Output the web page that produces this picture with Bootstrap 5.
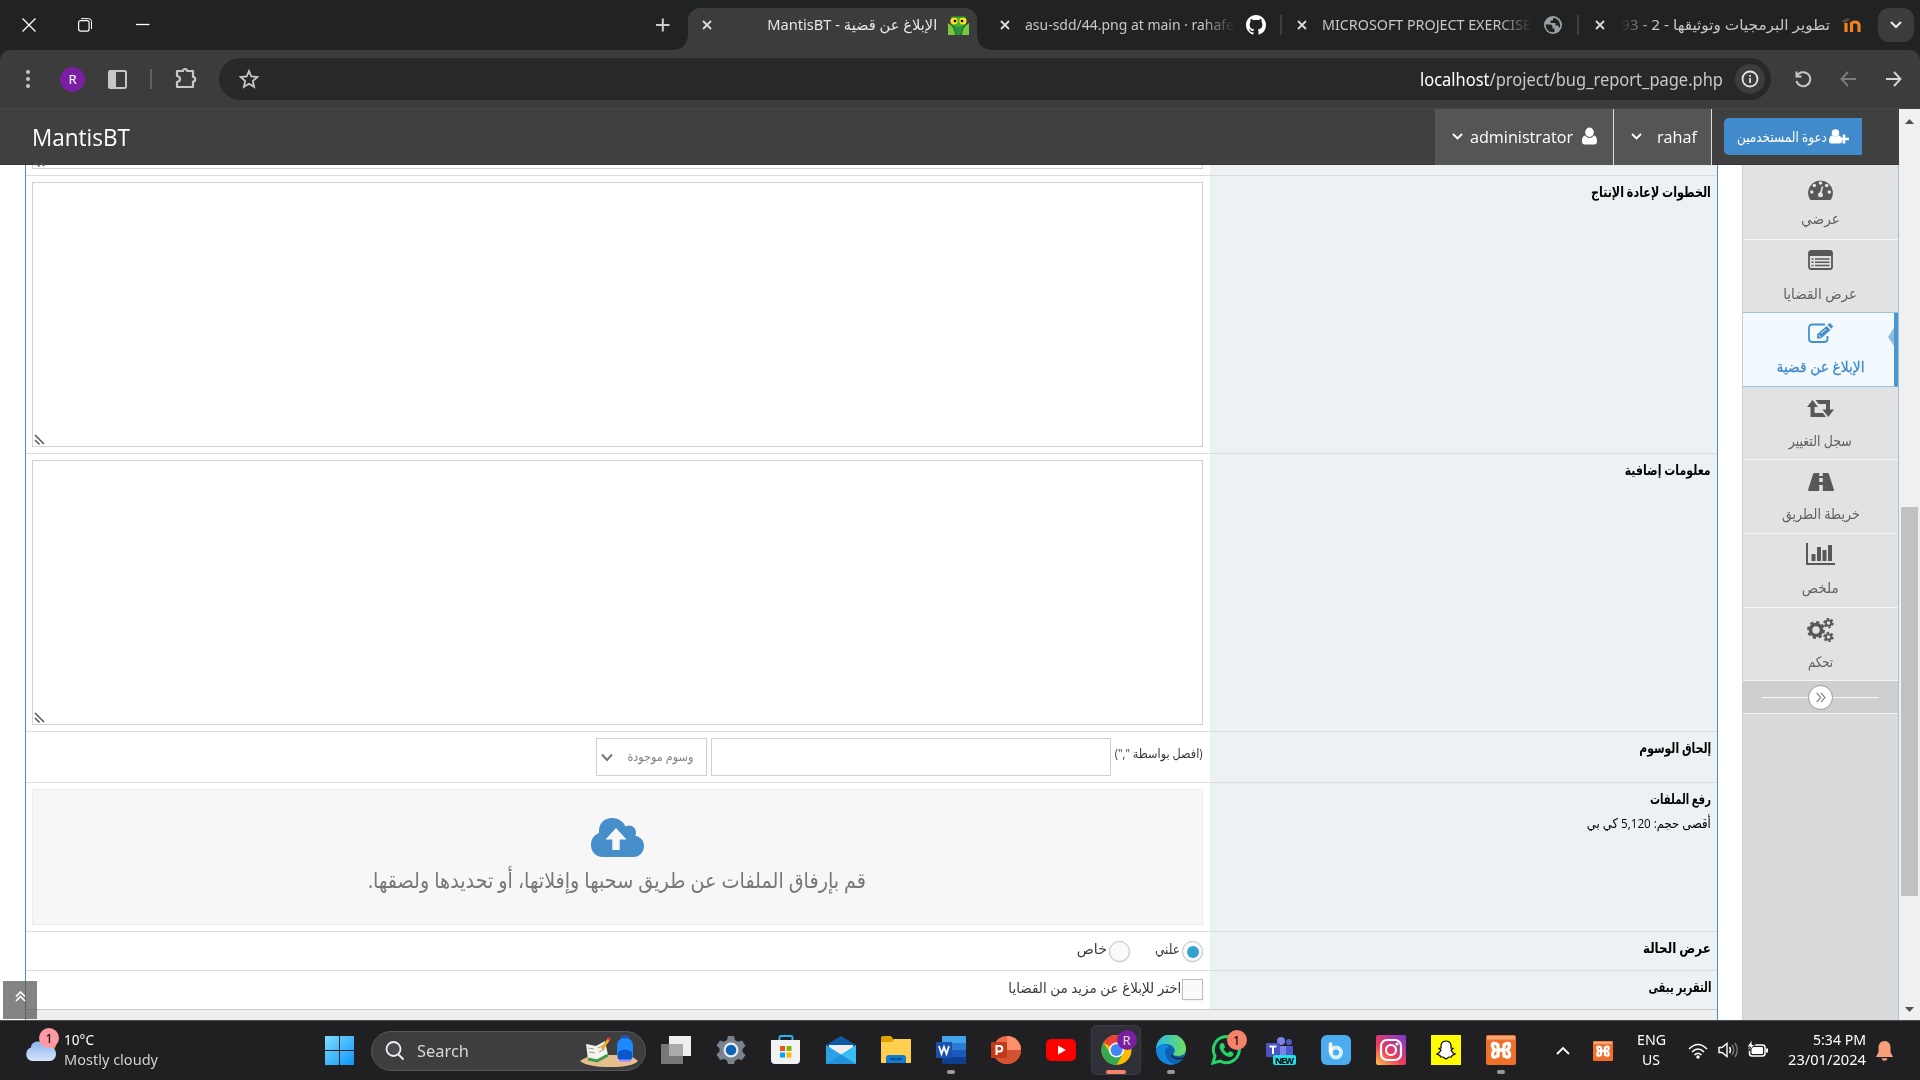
<!DOCTYPE html>
<html lang="ar">
<head>
<meta charset="utf-8">
<title>الإبلاغ عن قضية - MantisBT</title>
<link href="https://cdn.jsdelivr.net/npm/bootstrap@5.3.0/dist/css/bootstrap.min.css" rel="stylesheet">
<style>
body{width:1920px;height:1080px;overflow:hidden;font-family:"Open Sans","DejaVu Sans",sans-serif;font-size:13px;line-height:20px;color:#393939}
svg{display:block;flex:none}
.fit{display:inline-block;white-space:nowrap;flex:none}
.ui{font-family:"Noto Sans","DejaVu Sans",sans-serif}
/* browser frame */
.tabstrip{height:50px;background:#202322;color:#c7c7c7}
.winbtns{width:688px;padding-left:22px}
.btab{width:297.5px;height:42px;margin-top:8px;padding-left:14px;font-size:15px}
.btab .cap{width:210px;margin-left:15px;margin-right:11px;overflow:hidden;height:24px;line-height:23px}
.btab .sep{width:2px;height:20px;background:#3d403f;margin-left:14px}
.btab.fade-end .cap{-webkit-mask-image:linear-gradient(90deg,#000 84%,transparent)}
.btab.fade-start .cap{-webkit-mask-image:linear-gradient(270deg,#000 84%,transparent)}
.btab.on{color:#e6e6e6;position:relative;z-index:0}
.btab.on::before{content:"";position:absolute;z-index:-1;left:0;top:0;width:289px;height:42px;background:#3c3c3c;border-radius:12px 12px 0 0}
.btab.on::after{content:"";position:absolute;z-index:-1;left:-14px;bottom:0;width:317px;height:14px;background:radial-gradient(circle at 0 0,transparent 13.5px,#3c3c3c 14px) left/14px 14px no-repeat,radial-gradient(circle at 100% 0,transparent 13.5px,#3c3c3c 14px) right/14px 14px no-repeat}
.tabmenu{width:36px;height:34px;border-radius:11px;background:#3c3c3c;margin-left:auto;margin-right:6px}
.toolbar-wrap{background:#202322}
.toolbar{height:59px;background:#3c3c3c;border-bottom:1px solid #474747;border-radius:10px 10px 0 0;color:#c7c7c7}
.omni{width:1552px;height:42px;border-radius:21px;background:#282828;margin-left:22px}
.avatar{width:25px;height:25px;background:#7b1fa2;color:#fff;font-size:13px;margin-left:30px}
.infobg{width:30px;height:30px;background:#3c3c3c}
/* mantis */
.mbar{height:56px;background:#404040;border-bottom:1px solid #3a3638;color:#fff;font-size:16px}
.mbar .brand{font-size:23.5px;margin-left:32px}
.mcell{background:#555;height:56px;border-right:1px solid #ddd}
.invite{width:138px;height:37px;border-radius:5px 0 0 5px;background:#428bca;color:#fff;font-size:14px;margin:0 37px 0 12px;padding-left:13px;padding-right:13px}
.panel{margin-left:25px;width:1693px;border:solid #4a8fc2;border-width:0 1px}
.frow{border-bottom:1px solid #dcdcdc}
.lab{width:507px;background:#ecf2f4;padding:6px 6px 0;color:#000;font-weight:700;font-size:14px}
.lab .fw-normal{font-size:13.5px}
.fld{flex:1;padding:6px 7px 6px 6px;font-size:14px}
.ta{height:265px;border:1px solid #d0d0d0;position:relative}
.ta svg{position:absolute;left:1px;bottom:1px}
.tagbox{height:38px;border:1px solid #d0d0d0}
.dz{height:136px;background:#f7f7f7;border:1px solid #ececec;color:#777;font-size:21.5px;padding:28px 0 0}
.chk{width:21px;height:21px;border:1px solid #bdbdbd;background:#fafafa;flex:none;box-shadow:0 1px 2px #0001}
.side{width:157px;background:#dadada;border-left:1px solid #ccc;border-right:1px solid #9fc3df;color:#606060;font-size:14.5px}
.sitem{height:73.6px;background:#e2e2e2;border-bottom:1px solid #f6f6f6}
.sitem .ic{height:44px}
.sitem.on{background:#f2f9ff;color:#428bca;border-bottom-color:#9fc3df;border-right:4px solid #4b96cf;padding-left:4px;box-shadow:0 -1px #9fc3df;position:relative}
.sitem.on .fit{-webkit-text-stroke:.3px #428bca}
.sitem.on::after{content:"";position:absolute;right:0;top:15px;border:solid transparent;border-width:9px 6px 9px 0;border-right-color:#8ebbda}
.scol{height:33px;background:#cfcfcf;border-bottom:1px solid #f6f6f6}
.scol i{height:1px;background:#f6f6f6;width:46px}
.scol b{width:25px;height:25px;border:1px solid #999;background:#fff}
.sbar{width:21px;background:#f0f0f0}
.thumb{width:17px;height:389px;background:#c1c1c1;margin-top:383px}
.totop{position:absolute;left:3px;top:981px;width:34px;height:38px;background:rgba(85,85,85,.72)}
/* taskbar */
.tbar{height:60px;background:#202023;border-top:1px solid #4a4f4f;color:#fff;font-size:15px}
.lift{margin-top:-4px}
.sbox{width:275px;height:40px;border-radius:20px;background:#3e3e41;border:1px solid #56565a;margin-left:17px;padding:0 7px 0 13px}
.tapp{width:55px;height:50px;position:relative;flex:none;top:-1px}
.tapp .dot{position:absolute;bottom:1px;left:23px;width:8px;height:4px;border-radius:2px;background:#9a9a9a}
.tapp .dot.wide{left:17px;width:20px;background:#f4836a}
.tapp.on::before{content:"";position:absolute;left:2px;width:50px;height:50px;border-radius:5px;background:#303038;border:1px solid #3c3c44}
.bub{position:absolute;border-radius:50%;width:20px;height:20px;font-size:13px;line-height:20px;text-align:center}
</style>
<script src="https://cdn.jsdelivr.net/npm/bootstrap@5.3.0/dist/js/bootstrap.bundle.min.js"></script>
</head>
<body class="d-flex flex-column">
<svg width="0" height="0" class="position-absolute"><defs>
<symbol id="x" viewBox="0 0 10 10"><path d="M1 1l8 8M9 1L1 9" stroke="#dcdcdc" stroke-width="1.8"/></symbol>
<symbol id="grip" viewBox="0 0 11 11"><path d="M1 1l9 9M1 6l4.5 4.5" stroke="#555" stroke-width="1.5"/></symbol>
<symbol id="xampp" viewBox="0 0 30 30"><rect width="30" height="30" rx="2" fill="#f0702a"/><path d="M1 1h28v3.500H1z" fill="#f7a477"/><path d="M11.500 9.500Q6 6.500 6.500 11q.3 2.500 2.500 4-2.200 1.500-2.500 4-.5 5 5 2M18.500 9.500q5.500-3 5 1.500-.3 2.500-2.500 4 2.200 1.500 2.500 4 .5 5-5 2M12 10v2.500q0 2.500 3 2.500t3-2.500V10M12 21v-3.500q0-2.500 3-2.500t3 2.500V21" fill="none" stroke="#fff" stroke-width="3.300" stroke-linecap="round"/></symbol>
</defs></svg>

<div class="tabstrip d-flex ui">
  <div class="winbtns d-flex align-items-center">
    <svg width="14" height="14" viewBox="0 0 14 14"><path d="M.5.5l13 13M13.500.5l-13 13" stroke="#fff" stroke-width="1.3"/></svg>
    <svg width="14" height="14" viewBox="0 0 14 14" style="margin-left:42px"><rect x=".6" y="2.600" width="10.500" height="10.500" rx="2" fill="none" stroke="#fff" stroke-width="1.200"/><path d="M3 .6h7.500a3 3 0 0 1 3 3V11" fill="none" stroke="#fff"/></svg>
    <svg width="14" height="14" viewBox="0 0 14 14" style="margin-left:44px"><path d="M0 6.500h13.500" stroke="#fff" stroke-width="1.300"/></svg>
    <svg width="14" height="14" viewBox="0 0 14 14" style="margin-left:506px"><path d="M0 7h13.500M6.800.5v13" stroke="#ccc" stroke-width="2"/></svg>
  </div>
  <div class="btab on d-flex align-items-center pb-2">
    <svg width="10" height="10"><use href="#x"/></svg>
    <div class="cap" dir="rtl"><span class="fit" data-w="170">الإبلاغ عن قضية - MantisBT</span></div>
    <svg width="21" height="20" viewBox="0 0 21 20"><path d="M3 1h15v10l2 9H1l2-9z" fill="#1d7a2c"/><path d="M0 8q6 3 7 12H0zM21 8q-6 3-7 12h7z" fill="#7ac93b"/><path d="M5 9l5 3 6-3-4 11h-3z" fill="#2c9440"/><ellipse cx="10.500" cy="7" rx="7" ry="5" fill="#4caf32"/><circle cx="6" cy="6" r="3.600" fill="#ffdf1f"/><circle cx="15" cy="6" r="3.600" fill="#ffdf1f"/><circle cx="7" cy="6" r="1.300"/><circle cx="14" cy="6" r="1.300"/></svg>
  </div>
  <div class="btab fade-end d-flex align-items-center pb-2">
    <svg width="10" height="10"><use href="#x"/></svg>
    <div class="cap"><span class="fit" data-w="209">asu-sdd/44.png at main · rahafe</span></div>
    <svg width="20" height="20" viewBox="0 0 16 16" fill="#fff"><path d="M8 0C3.580 0 0 3.580 0 8c0 3.540 2.290 6.530 5.470 7.590.4.070.55-.17.55-.38 0-.19-.01-.82-.01-1.490-2.010.37-2.530-.49-2.690-.94-.09-.23-.48-.94-.82-1.130-.28-.15-.68-.52-.01-.53.63-.01 1.080.58 1.230.82.72 1.210 1.870.87 2.330.66.070-.52.28-.87.51-1.070-1.780-.2-3.640-.89-3.640-3.950 0-.87.31-1.590.82-2.150-.08-.2-.36-1.020.08-2.120 0 0 .67-.21 2.200.82a7.600 7.600 0 0 1 4 0c1.530-1.040 2.200-.82 2.200-.82.44 1.100.16 1.920.08 2.120.51.56.82 1.270.82 2.150 0 3.070-1.870 3.750-3.650 3.950.29.25.54.73.54 1.480 0 1.070-.01 1.930-.01 2.200 0 .21.15.46.55.38A8 8 0 0 0 16 8c0-4.420-3.580-8-8-8z"/></svg>
    <div class="sep"></div>
  </div>
  <div class="btab fade-end d-flex align-items-center pb-2">
    <svg width="10" height="10"><use href="#x"/></svg>
    <div class="cap"><span class="fit" data-w="209">MICROSOFT PROJECT EXERCISE</span></div>
    <svg width="20" height="20" viewBox="0 0 20 20"><circle cx="10" cy="10" r="9" fill="#9aa0a6"/><path d="M2.500 9.500h5q2 0 2 2v2h2v3.500q-8 1.500-9-7.500zM10 3v2.500H7.500V8h5v2.500h3v2h1.500q1-6-4-9z" fill="#202322"/></svg>
    <div class="sep"></div>
  </div>
  <div class="btab fade-start d-flex align-items-center pb-2">
    <svg width="10" height="10"><use href="#x"/></svg>
    <div class="cap" dir="rtl"><span class="fit" data-w="209">تطوير البرمجيات وتوثيقها - 2 - 93</span></div>
    <svg width="20" height="16" viewBox="0 0 20 16"><path d="M5 15V6M10.500 15V8q0-3 3.500-3t4 3v7M10.500 15V5" stroke="#f47f20" stroke-width="3.200" fill="none"/><path d="M0 4l7-3 2 2-5 3z" fill="#5a4a40"/></svg>
  </div>
  <div class="tabmenu d-flex align-items-center justify-content-center mt-2"><svg width="12" height="8" viewBox="0 0 12 8"><path d="M1 1l5 5 5-5" fill="none" stroke="#eee" stroke-width="2"/></svg></div>
</div>
<div class="toolbar-wrap">
<div class="toolbar d-flex align-items-center ui">
  <svg width="4" height="18" viewBox="0 0 4 18" fill="#c7c7c7" style="margin-left:26px"><circle cx="2" cy="2" r="2"/><circle cx="2" cy="9" r="2"/><circle cx="2" cy="16" r="2"/></svg>
  <div class="avatar rounded-circle d-flex align-items-center justify-content-center">R</div>
  <svg width="19" height="19" viewBox="0 0 19 19" style="margin-left:23px"><rect x="1" y="1" width="17" height="17" rx="1.500" fill="none" stroke="#c7c7c7" stroke-width="2"/><path d="M1 1h7v17H1z" fill="#c7c7c7"/></svg>
  <div style="width:2px;height:20px;background:#606060;margin-left:23px"></div>
  <svg width="22" height="22" viewBox="0 0 22 22" style="margin:0 0 2px 23px"><path d="M2 4h6a2 2 0 0 1 4 0h6v6a2 2 0 0 1 0 4.500V20H2v-5q3-.5 3-3T2 9z" fill="none" stroke="#c7c7c7" stroke-width="2.200" stroke-linejoin="round"/></svg>
  <div class="omni d-flex align-items-center">
    <svg width="20" height="20" viewBox="0 0 20 20" style="margin-left:20px"><path d="M10 2l2.300 5.500 6 .5-4.500 4 1.300 5.800L10 14.700l-5.100 3.100L6.200 12 1.700 8l6-.5z" fill="none" stroke="#c7c7c7" stroke-width="1.800"/></svg>
    <div class="ms-auto d-flex align-items-center" style="font-size:17.500px"><span class="fit" data-w="303"><span class="text-white">localhost</span>/project/bug_report_page.php</span>
    <div class="infobg rounded-circle d-flex align-items-center justify-content-center" style="margin:0 6px 0 12px"><svg width="18" height="18" viewBox="0 0 18 18"><circle cx="9" cy="9" r="7.500" fill="none" stroke="#e3e3e3" stroke-width="1.800"/><path d="M9 8v5M9 5v1.800" stroke="#e3e3e3" stroke-width="1.800"/></svg></div></div>
  </div>
  <svg width="18" height="18" viewBox="0 0 18 18" style="margin-left:23px"><path d="M2.500 1.500V6.500h5M3 6a7 7 0 1 1-.5 5" fill="none" stroke="#c7c7c7" stroke-width="2"/></svg>
  <svg width="17" height="16" viewBox="0 0 17 16" style="margin-left:28px"><path d="M16 8H2M8 1L1.500 8 8 15" fill="none" stroke="#7d7d7d" stroke-width="1.900"/></svg>
  <svg width="17" height="16" viewBox="0 0 17 16" style="margin-left:28px"><path d="M1 8h14M9 1l6.500 7L9 15" fill="none" stroke="#d5d5d5" stroke-width="1.900"/></svg>
</div></div>

<div class="d-flex bg-white position-relative" style="height:911px">
  <div class="d-flex flex-column" style="width:1899px">
    <nav class="mbar d-flex align-items-center flex-shrink-0">
      <span class="brand"><span class="fit" data-w="98">MantisBT</span></span>
      <div class="mcell ms-auto d-flex align-items-center" style="width:179px;padding-left:17px">
        <svg width="11" height="7" viewBox="0 0 11 7"><path d="M1 1l4.500 4.500L10 1" fill="none" stroke="#fff" stroke-width="1.900"/></svg>
        <span class="fit" data-w="103" style="margin-left:7px">administrator</span>
        <svg width="15" height="18" viewBox="0 0 16 18" fill="#fff" style="margin:0 0 2px 9px"><ellipse cx="8" cy="5" rx="4.600" ry="5"/><path d="M3.500 8.500C1 9 0 11 0 14.500 0 17 1 18 3 18h10c2 0 3-1 3-3.500C16 11 15 9 12.500 8.500 11 10.500 9.500 11 8 11s-3-.5-4.500-2.500z"/></svg>
      </div>
      <div class="mcell d-flex align-items-center" style="width:98px;padding-left:17px">
        <svg width="11" height="7" viewBox="0 0 11 7"><path d="M1 1l4.500 4.500L10 1" fill="none" stroke="#fff" stroke-width="1.900"/></svg>
        <span class="fit" data-w="40" style="margin-left:15px">rahaf</span>
      </div>
      <div class="invite d-flex align-items-center justify-content-between" dir="ltr"><span class="fit" data-w="90">دعوة المستخدمين</span>
        <svg width="20" height="15" viewBox="0 0 20 15" fill="#fff"><circle cx="6.500" cy="4" r="3.800"/><path d="M3 6.500C1 7 0 9 0 12q0 2.500 2.500 2.500h8Q13 14.500 13 12c0-3-1-5-3-5.500-1.500 1.500-5.500 1.500-7 0z"/><path d="M15 5.500v9M10.500 10H20" stroke="#fff" stroke-width="2.600"/></svg></div>
    </nav>
    <div class="d-flex flex-grow-1">
      <main class="panel d-flex flex-column" dir="rtl">
        <div class="frow d-flex" style="height:11px"><div class="lab"></div><div class="fld pt-0"><div class="ta" style="height:4px;border-top:0"><svg width="11" height="4" viewBox="0 7 11 4"><use href="#grip" width="11" height="11"/></svg></div></div></div>
        <div class="frow d-flex" style="height:278px"><div class="lab"><span class="fit" data-w="120">الخطوات لإعادة الإنتاج</span></div><div class="fld"><div class="ta"><svg width="11" height="11"><use href="#grip"/></svg></div></div></div>
        <div class="frow d-flex" style="height:278px"><div class="lab"><span class="fit" data-w="86">معلومات إضافية</span></div><div class="fld"><div class="ta"><svg width="11" height="11"><use href="#grip"/></svg></div></div></div>
        <div class="frow d-flex" style="height:51px"><div class="lab"><span class="fit" data-w="72">إلحاق الوسوم</span></div>
          <div class="fld d-flex"><span class="fit" data-w="88" style="font-size:12.500px;margin-top:6px">(افصل بواسطة ",")</span><div class="tagbox" style="width:400px;margin-right:4px"></div>
            <div class="tagbox d-flex align-items-center justify-content-between" style="width:111px;margin-right:4px;padding:0 13px 0 4px;color:#858585;font-size:12.500px"><span class="fit" data-w="66">وسوم موجودة</span><svg width="12" height="9" viewBox="0 0 12 9"><path d="M1 1.500l5 5.500 5-5.500" fill="none" stroke="#777" stroke-width="2"/></svg></div></div></div>
        <div class="frow d-flex" style="height:149px"><div class="lab"><span class="fit" data-w="61">رفع الملفات</span><br><span class="fit fw-normal" data-w="124" style="margin-top:4px">أقصى حجم: 5,120 كي بي</span></div>
          <div class="fld"><div class="dz d-flex flex-column align-items-center">
            <svg width="53" height="39" viewBox="0 0 53 39"><path d="M12 39C4 39 0 33 0 27c0-6 3-10 8-12C7 5 14 0 21 0c6 0 11 3 13.500 8.500C39 6 45 9 45 14.500c0 1.200-.2 2.200-.8 3.300C50 19 53 23 53 28c0 6-4 11-11 11z" fill="#478fca"/><path d="M25 10L35.500 21.500h-6.800V32h-7.400V21.500h-6.800z" fill="#f7f7f7"/></svg>
            <span class="fit" data-w="498" style="margin-top:13px">قم بإرفاق الملفات عن طريق سحبها وإفلاتها، أو تحديدها ولصقها.</span></div></div></div>
        <div class="frow d-flex" style="height:39px"><div class="lab"><span class="fit" data-w="68">عرض الحالة</span></div>
          <div class="fld d-flex align-items-start" style="padding-top:9px"><div class="chk rounded-circle d-flex align-items-center justify-content-center"><div class="rounded-circle" style="width:12px;height:12px;background:#32a3ce"></div></div><span class="fit" data-w="25" style="margin-right:2px;margin-top:-2px">علني</span>
            <div style="width:25px;flex:none"></div><div class="chk rounded-circle"></div><span class="fit" data-w="30" style="margin-right:2px;margin-top:-2px">خاص</span></div></div>
        <div class="frow d-flex" style="height:39px;border-color:#c9c9c9"><div class="lab"><span class="fit" data-w="63">التقرير يبقى</span></div>
          <div class="fld d-flex align-items-start" style="padding-top:8px"><div class="chk"></div><span class="fit" data-w="173" style="margin-right:1px;margin-top:-1px">اختر للإبلاغ عن مزيد من القضايا</span></div></div>
        <div class="flex-grow-1" style="background:#eee"></div>
      </main>
      <aside class="side ms-auto" dir="rtl">
        <div class="sitem text-center" style="height:74.600px"><div class="ic d-flex align-items-center justify-content-center pt-1"><svg width="25" height="21" viewBox="0 0 25 21"><path d="M2 20.500a12.400 12.400 0 1 1 21 0q-.5.5-1 .5H3q-.7 0-1-.5z" fill="#585858"/><g fill="#e2e2e2"><circle cx="3.800" cy="13" r="1.800"/><circle cx="6.300" cy="6.500" r="1.800"/><circle cx="12.500" cy="4" r="1.800"/><circle cx="18.700" cy="6.500" r="1.800"/><circle cx="21.300" cy="13" r="1.800"/><circle cx="12.500" cy="15.800" r="2.500"/></g><path d="M12.500 15l2-7.500" stroke="#e2e2e2" stroke-width="1.600"/></svg></div><span class="fit" data-w="39">عرضي</span></div>
        <div class="sitem text-center"><div class="ic d-flex align-items-center justify-content-center pb-1"><svg width="25" height="20" viewBox="0 0 25 20"><rect x="1" y="1" width="23" height="18" rx="2" fill="none" stroke="#585858" stroke-width="1.800"/><path d="M1 1h23v5H1z" fill="#585858"/><path d="M3.500 9h2M7 9h14.500M3.500 12.300h2M7 12.300h14.500M3.500 15.600h2M7 15.600h14.500" stroke="#585858" stroke-width="1.500"/></svg></div><span class="fit" data-w="74">عرض القضايا</span></div>
        <div class="sitem on text-center"><div class="ic d-flex align-items-center justify-content-center pb-1"><svg width="25" height="20" viewBox="0 0 25 20"><path d="M17 1.500H4.500Q1 1.500 1 5v11q0 3 3.500 3h11.500q3.500 0 3.500-3v-3" fill="none" stroke="#478fca" stroke-width="1.800"/><path d="M9 15.500v-4L18.500 3l4 4-9.500 8.500zM19.500 2l1.500-1.500q.8-.6 1.500 0L24.700 2.700q.6.8 0 1.400L23.400 5.800z" fill="#478fca"/><path d="M10.500 12l2.500 2.500M13 10.500l5-4.500" stroke="#f2f9ff" stroke-width="1"/></svg></div><span class="fit" data-w="88">الإبلاغ عن قضية</span></div>
        <div class="sitem text-center"><div class="ic d-flex align-items-center justify-content-center"><svg width="27" height="17" viewBox="0 0 27 17" fill="#585858"><path d="M5.500 0L11 7H7.500v6H16l3 4H3.500V7H0zM8.500 0H23v9.500h4L21.300 17l-5.800-7.500H19V4h-7.300z"/></svg></div><span class="fit" data-w="63">سجل التغيير</span></div>
        <div class="sitem text-center"><div class="ic d-flex align-items-center justify-content-center"><svg width="26" height="18" viewBox="0 0 26 18"><path d="M6.500 0h13q1 0 1.400 1L26 17q0 1-1 1H1q-1 0-1-1L5.100 1Q5.500 0 6.500 0z" fill="#585858"/><path d="M13 0v3M13 5v4M13 12v6" stroke="#e2e2e2" stroke-width="3.500"/></svg></div><span class="fit" data-w="78">خريطة الطريق</span></div>
        <div class="sitem text-center"><div class="ic d-flex align-items-center justify-content-center pb-1"><svg width="29" height="22" viewBox="0 0 29 22"><path d="M1 0v21h28" fill="none" stroke="#585858" stroke-width="2"/><path d="M7.500 18v-7M13 18V4M18.500 18V7M24 18V2" stroke="#585858" stroke-width="4"/></svg></div><span class="fit" data-w="37">ملخص</span></div>
        <div class="sitem text-center"><div class="ic d-flex align-items-center justify-content-center"><svg width="27" height="24" viewBox="0 0 27 24" fill="none" stroke="#585858"><circle cx="9" cy="12" r="5.500" stroke-width="3.600"/><circle cx="9" cy="12" r="7.900" stroke-width="2.200" stroke-dasharray="3.300 2.900"/><circle cx="21.500" cy="5" r="2.800" stroke-width="2"/><circle cx="21.500" cy="5" r="4.400" stroke-width="1.700" stroke-dasharray="2.300 2.300"/><circle cx="21.500" cy="19" r="2.800" stroke-width="2"/><circle cx="21.500" cy="19" r="4.400" stroke-width="1.700" stroke-dasharray="2.300 2.300"/></svg></div><span class="fit" data-w="25">تحكم</span></div>
        <div class="scol d-flex align-items-center justify-content-center"><i></i><b class="rounded-circle d-flex align-items-center justify-content-center"><svg width="10" height="11" viewBox="0 0 10 11"><path d="M.7 1l4 4.500-4 4.500M5 1l4 4.500L5 10" fill="none" stroke="#888" stroke-width="1.200"/></svg></b><i></i></div>
      </aside>
    </div>
  </div>
  <div class="sbar d-flex flex-column align-items-center">
    <svg width="9" height="5" viewBox="0 0 9 5" style="margin-top:10px"><path d="M4.500 0L9 5H0z" fill="#505050"/></svg>
    <div class="thumb"></div>
    <svg class="mt-auto" width="9" height="5" viewBox="0 0 9 5" style="margin-bottom:8px"><path d="M0 0h9L4.500 5z" fill="#505050"/></svg>
  </div>
</div>
<a class="totop d-flex align-items-center justify-content-center pb-2"><svg width="11" height="11" viewBox="0 0 11 11"><path d="M1 5.500l4.500-4.500L10 5.500M1 10l4.500-4.500L10 10" fill="none" stroke="#fff" stroke-width="1.700"/></svg></a>

<footer class="tbar d-flex align-items-center ui">
  <div class="d-flex align-items-center position-relative lift" style="width:325px;padding-left:25px">
    <svg width="31" height="28" viewBox="0 0 31 28"><defs><linearGradient id="cl" x2="0" y2="1"><stop stop-color="#8bb4f0"/><stop offset="1" stop-color="#d4e4fb"/></linearGradient></defs><circle cx="25" cy="10" r="6" fill="#f7811f"/><path d="M7 26a7 7 0 0 1-1-13.500C6 5 18 4 20 12c5-3 11 1 11 7 0 4-3 7-6 7z" fill="url(#cl)"/></svg>
    <span class="bub text-black" style="left:39px;top:-1px;background:#ff99a4">1</span>
    <div style="margin-left:8px"><div><span class="fit" data-w="30">10°C</span></div><div style="color:#d0d0d0"><span class="fit" data-w="94">Mostly cloudy</span></div></div>
  </div>
  <svg width="29" height="29" viewBox="0 0 29 29"><defs><linearGradient id="wn" x2="1" y2="1"><stop stop-color="#7fdcff"/><stop offset="1" stop-color="#0a96f8"/></linearGradient></defs><path d="M0 0h14v14H0zM15 0h14v14H15zM0 15h14v14H0zM15 15h14v14H15z" fill="url(#wn)"/></svg>
  <div class="sbox d-flex align-items-center">
    <svg width="20" height="20" viewBox="0 0 20 20"><circle cx="8.500" cy="8" r="7" fill="#4a4a50" stroke="#eee" stroke-width="1.800"/><path d="M13.500 13.500l5 5" stroke="#eee" stroke-width="2"/></svg>
    <span class="fit" data-w="52" style="margin-left:12px;color:#d6d6d6;font-size:16.500px">Search</span>
    <svg class="ms-auto" width="58" height="32" viewBox="0 0 58 32"><path d="M0 26q8-6 20-6h26q8 2 12 6-6 6-28 6T0 26z" fill="#e5c08c"/><path d="M6 9l10 2 9-5 3 14-11 6-9-2z" fill="#f3f3ea"/><path d="M8 24l9 2 11-6" fill="none" stroke="#3b9a4c" stroke-width="3"/><path d="M8 13l6 1M9 17l6 1M18 13l6-3M19 17l6-3" stroke="#999"/><path d="M22 14l7-10" stroke="#f5a623" stroke-width="3"/><path d="M28 5l1.500-2" stroke="#e53935" stroke-width="3.500"/><path d="M41 3q4-4 8 0" fill="none" stroke="#2457c5" stroke-width="2"/><rect x="37" y="3" width="16" height="24" rx="7" fill="#1e88ff"/><path d="M38 17q7-5 14 0v7H38z" fill="#0b57c9"/><path d="M39 26h12" stroke="#c18cf5" stroke-width="2"/></svg>
  </div>
  <div class="d-flex" style="margin-left:2.500px;width:880px">
    <div class="tapp d-flex align-items-center justify-content-center"><svg width="30" height="28" viewBox="0 0 30 28"><rect x="8" width="22" height="20" fill="#efefef"/><rect y="8" width="22" height="20" fill="#777"/><rect x="8" y="8" width="14" height="12" fill="#aaa"/></svg></div>
    <div class="tapp d-flex align-items-center justify-content-center"><svg width="30" height="30" viewBox="0 0 30 30"><path d="M12 1h6l1 4 3 1.700L26 5.500l3.500 5.500-3 3v3l3 3L26 25l-4-1-3 1.700L18 29h-6l-1-3.500L8 24l-4 1-3.500-5.500 3-3v-3l-3-3L4 5.500l4 1.200L11 5z" fill="#78838e"/><circle cx="15" cy="15" r="7.500" fill="#e9edf0"/><circle cx="15" cy="15" r="5.300" fill="#0f63b5"/></svg></div>
    <div class="tapp d-flex align-items-center justify-content-center"><svg width="30" height="30" viewBox="0 0 30 30"><path d="M8.500 7V2.500q0-1.500 1.500-1.500h10q1.500 0 1.500 1.500V7" fill="none" stroke="#2bb3ec" stroke-width="2"/><path d="M0 5h29v20q0 4-4 4H4q-4 0-4-4z" fill="#f2f2f2"/><path d="M9 11h5v5H9z" fill="#f25022"/><path d="M15.500 11h5v5h-5z" fill="#7fba00"/><path d="M9 17.500h5v5H9z" fill="#00a4ef"/><path d="M15.500 17.500h5v5h-5z" fill="#ffb900"/></svg></div>
    <div class="tapp d-flex align-items-center justify-content-center"><svg width="30" height="28" viewBox="0 0 30 28"><path d="M0 9L15 0l15 9v10H0z" fill="#0c59a4"/><path d="M3 9h24v8L15 20 3 17z" fill="#eee"/><path d="M0 9l30 19H0z" fill="#2ea1e6"/><path d="M30 9v19H0z" fill="#35bff2"/><path d="M15 18.500L30 28H0z" fill="#2290dc"/></svg></div>
    <div class="tapp d-flex align-items-center justify-content-center"><svg width="30" height="28" viewBox="0 0 30 28"><path d="M0 2q0-2 2-2h8l3 4h17v8H0z" fill="#e2a100"/><path d="M0 6h11l2-3h17v24H0z" fill="#ffd04f"/><path d="M5 27v-5q0-3 3-3h14q3 0 3 3v5z" fill="#0f7bd0"/><path d="M9 23h12" stroke="#0a4d8c" stroke-width="2"/></svg></div>
    <div class="tapp d-flex align-items-center justify-content-center"><svg width="30" height="28" viewBox="0 0 30 28"><path d="M6 0h24v7H6z" fill="#41a5ee"/><path d="M6 7h24v7H6z" fill="#2b7cd3"/><path d="M6 14h24v7H6z" fill="#185abd"/><path d="M6 21h24v7H6z" fill="#103f91"/><rect y="6" width="16" height="16" rx="1" fill="#1a51ad"/><path d="M3 10l2.500 8L8 11l2.500 7L13 10" fill="none" stroke="#fff" stroke-width="1.800"/></svg><span class="dot"></span></div>
    <div class="tapp d-flex align-items-center justify-content-center"><svg width="30" height="28" viewBox="0 0 30 28"><circle cx="16" cy="14" r="14" fill="#ed6c47"/><path d="M16 0a14 14 0 0 1 14 14H16z" fill="#ff8f6b"/><path d="M2 14h28a14 14 0 0 1-28 0z" fill="#d35230"/><rect y="6" width="16" height="16" rx="1" fill="#c13b1b"/><path d="M5.500 19v-9h3a2.700 2.700 0 0 1 0 5.500h-3" fill="none" stroke="#fff" stroke-width="2"/></svg></div>
    <div class="tapp d-flex align-items-center justify-content-center"><svg width="30" height="22" viewBox="0 0 30 22"><rect width="30" height="22" rx="5" fill="#f00"/><path d="M12 6.500l8 4.500-8 4.500z" fill="#fff"/></svg></div>
    <div class="tapp on d-flex align-items-center justify-content-center"><svg class="position-relative" width="31" height="30" viewBox="0 0 30 30"><circle cx="15" cy="15" r="15" fill="#fbbc04"/><path d="M15 15L2 7.500A15 15 0 0 1 28 7.500H15z" fill="#ea4335"/><path d="M15 15L15 22.500 10.500 29.300A15 15 0 0 1 2 7.500l6.500 11z" fill="#34a853"/><path d="M21.500 18.700L15 30A15 15 0 0 1 10 29l5-7z" fill="#34a853"/><circle cx="15" cy="15" r="7.500" fill="#fff"/><circle cx="15" cy="15" r="6" fill="#4285f4"/></svg><span class="bub" style="background:#7b1fa2;left:28px;top:5px;color:#ddd">R</span><span class="dot wide"></span></div>
    <div class="tapp d-flex align-items-center justify-content-center"><svg width="30" height="30" viewBox="0 0 30 30"><defs><linearGradient id="eg" x2="1"><stop stop-color="#2bb6ee"/><stop offset="1" stop-color="#6ee05b"/></linearGradient></defs><circle cx="15" cy="15" r="15" fill="#0e62b6"/><path d="M0 14A15 15 0 0 1 30 14c0 5-4 7-8 7-3 0-5-1-5-2 2-2 2-4 1-6-4-6-14-5-18 1z" fill="url(#eg)"/><path d="M0 15c2-6 9-7 13-4-4 2-5 6-3 11 2 4 5 6 9 7A15 15 0 0 1 0 15z" fill="#1386dc"/><path d="M16 19c1 4 7 5 12 3l3-3v4l-3 0c-3 2-6 1.500-8 1-4-1-6-4-4-5z" fill="#202023"/></svg><span class="dot"></span></div>
    <div class="tapp d-flex align-items-center justify-content-center"><svg width="30" height="30" viewBox="0 0 30 30"><path d="M2 28l2-7A13 13 0 1 1 9 26z" fill="none" stroke="#25d366" stroke-width="3"/><path d="M10 8l3 .5 1 4-1.500 1.500q1.500 3 4.500 4l2-2 3.500 2q0 4-4 4C13 21 8 15 8.500 11z" fill="#25d366"/></svg><span class="bub text-black" style="background:#f4836a;left:28px;top:5px">1</span></div>
    <div class="tapp d-flex align-items-center justify-content-center"><svg width="30" height="30" viewBox="0 0 30 30"><circle cx="15" cy="6" r="4" fill="#7b83eb"/><circle cx="23" cy="7" r="3" fill="#5059c9"/><path d="M19 11h8v12h-8z" fill="#5059c9"/><path d="M8 11h12v14H8z" fill="#7b83eb"/><rect y="8" width="14" height="14" rx="1" fill="#4b53bc"/><path d="M3.500 11.500h7M7 11.500V19" stroke="#fff" stroke-width="2"/><rect x="7" y="20" width="23" height="10" rx="2" fill="#22e0e8"/><text x="9" y="28.500" font-size="9" font-weight="700" textLength="19">NEW</text></svg></div>
    <div class="tapp d-flex align-items-center justify-content-center"><svg width="30" height="30" viewBox="0 0 30 30"><rect width="30" height="30" rx="6" fill="#4badf0"/><circle cx="15" cy="17.500" r="5" fill="none" stroke="#d7f0ff" stroke-width="3.800"/><path d="M9.500 9v8" stroke="#fff" stroke-width="3.500" stroke-linecap="round"/></svg></div>
    <div class="tapp d-flex align-items-center justify-content-center"><svg width="30" height="30" viewBox="0 0 30 30"><defs><linearGradient id="ig" x1="0" y1="1" x2=".8" y2="0"><stop stop-color="#ffc24a"/><stop offset=".45" stop-color="#ee3b5b"/><stop offset="1" stop-color="#8a3ac8"/></linearGradient></defs><rect width="30" height="30" rx="2" fill="url(#ig)"/><rect x="5" y="5" width="20" height="20" rx="6" fill="none" stroke="#fff" stroke-width="2.200"/><circle cx="15" cy="15" r="5" fill="none" stroke="#fff" stroke-width="2.200"/><circle cx="21" cy="9" r="1.500" fill="#fff"/></svg></div>
    <div class="tapp d-flex align-items-center justify-content-center"><svg width="30" height="30" viewBox="0 0 30 30"><path d="M0 0h30v30H0z" fill="#fffc00"/><path d="M15 6c4 0 5.500 3 5 7l2 .3-2 2c1 2 2 3 4 3.700l-3 1.500-.5 1.500-2.500 0-3 2-3-2-2.500 0-.5-1.500L6 19c2-.7 3-1.700 4-3.700l-2-2 2-.3c-.5-4 1-7 5-7z" fill="#fff" stroke="#000" stroke-width="1.200"/></svg></div>
    <div class="tapp d-flex align-items-center justify-content-center"><svg width="30" height="30"><use href="#xampp"/></svg><span class="dot"></span></div>
  </div>
  <svg width="14" height="9" viewBox="0 0 14 9" style="margin-left:27px"><path d="M1 8l6-6 6 6" fill="none" stroke="#fff" stroke-width="1.800"/></svg>
  <svg width="20" height="20" style="margin-left:23px"><use href="#xampp"/></svg>
  <div class="text-center lift" style="margin-left:24px;width:29px"><span class="fit" data-w="29">ENG</span><br><span class="fit" data-w="18">US</span></div>
  <svg width="20" height="16" viewBox="0 0 20 16" fill="none" stroke="#fff" stroke-width="1.500" style="margin-left:22px"><path d="M1 6q9-9 18 0M4 9q6-6 12 0M6.500 12q3.500-3.500 7 0"/><circle cx="10" cy="14" r="1" fill="#fff"/></svg>
  <svg width="20" height="16" viewBox="0 0 20 16" fill="none" stroke="#fff" stroke-width="1.400" style="margin:0 0 2px 10px"><path d="M1 5.500h3L9 1.500v13L4 10.500H1zM11.500 5q2 3 0 6"/><path d="M14 3q3.500 5 0 10M17 1q4.500 7 0 14" stroke="#777"/></svg>
  <svg width="21" height="18" viewBox="0 0 21 18" style="margin:0 0 3px 9px"><rect x="2.500" y="5" width="15.500" height="11" rx="2.500" fill="none" stroke="#fff" stroke-width="1.500"/><rect x="4.500" y="7" width="11.500" height="7" rx="1" fill="#fff"/><path d="M20 8.500v4" stroke="#fff" stroke-width="2"/><path d="M5-.5L0 7h3.500L2 11 8 4.500H5z" fill="#fff" stroke="#202023"/></svg>
  <div class="text-end lift" dir="rtl" style="width:98px"><div class="d-flex"><span class="fit" data-w="53" dir="ltr">5:34 PM</span></div><div class="d-flex"><span class="fit" data-w="78" dir="ltr">23/01/2024</span></div></div>
  <svg width="17" height="20" viewBox="0 0 17 20" style="margin-left:10px"><path d="M8.500 0C4.500 0 2.500 3 2.500 7v4L0 16h17l-2.500-5V7c0-4-2-7-6-7zM5.500 17.300h6q-.5 2.500-3 2.500t-3-2.500z" fill="#f7a07c"/></svg>
</footer>
<script>
// Condense or widen each label horizontally to its designed width
document.querySelectorAll('.fit').forEach(function(el){
  var w=+el.dataset.w, n=el.getBoundingClientRect().width, rtl=getComputedStyle(el).direction==='rtl';
  el.style.transformOrigin=(rtl?'right':'left')+' center';
  el.style.transform='scaleX('+(w/n)+')';
  el.style[rtl?'marginLeft':'marginRight']=(w-n)+'px';
});
</script>
</body>
</html>
